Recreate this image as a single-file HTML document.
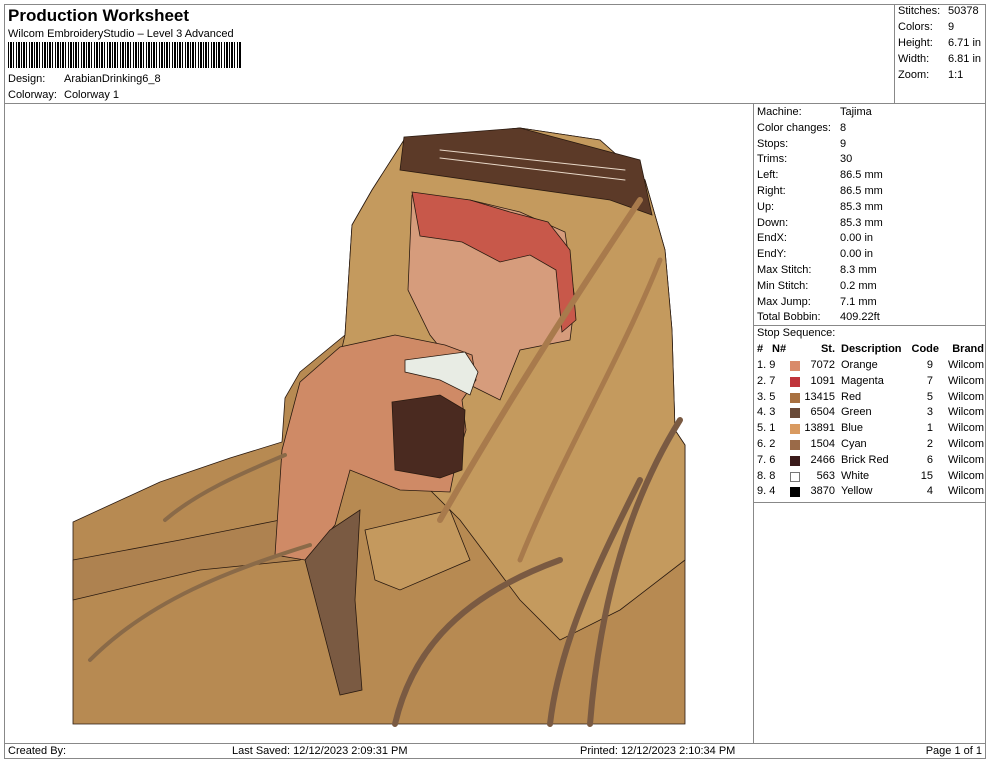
<!DOCTYPE html>
<html><head><meta charset="utf-8"><style>
*{margin:0;padding:0;box-sizing:border-box}
body{width:990px;height:762px;background:#fff;font-family:"Liberation Sans",Arial,sans-serif;font-size:11px;color:#000;position:relative;overflow:hidden}
.a{position:absolute;white-space:nowrap;line-height:13px}
.ln{position:absolute;background:#888}
</style></head><body>
<div class="ln" style="left:4px;top:4px;width:982px;height:1px"></div>
<div class="ln" style="left:4px;top:4px;width:1px;height:755px"></div>
<div class="ln" style="left:985px;top:4px;width:1px;height:755px"></div>
<div class="ln" style="left:4px;top:758px;width:982px;height:1px"></div>
<div class="ln" style="left:4px;top:103px;width:982px;height:1px"></div>
<div class="ln" style="left:894px;top:4px;width:1px;height:99px"></div>
<div class="ln" style="left:753px;top:103px;width:1px;height:641px"></div>
<div class="ln" style="left:753px;top:325px;width:233px;height:1px"></div>
<div class="ln" style="left:753px;top:502px;width:233px;height:1px"></div>
<div class="ln" style="left:4px;top:743px;width:982px;height:1px"></div>

<div class="a" style="left:8px;top:6px;font-size:17px;font-weight:bold;line-height:20px">Production Worksheet</div>
<div class="a" style="left:8px;top:28px">Wilcom EmbroideryStudio – Level 3 Advanced</div>
<div class="a" style="left:8px;top:42px;width:234px;height:26px;background:repeating-linear-gradient(90deg,#000 0 1px,#fff 1px 2px,#000 2px 4px,#fff 4px 5px,#000 5px 6px,#fff 6px 8px,#000 8px 9px,#fff 9px 10px,#000 10px 12px,#fff 12px 13px)"></div>
<div class="a" style="left:8px;top:73px">Design:</div><div class="a" style="left:64px;top:73px">ArabianDrinking6_8</div>
<div class="a" style="left:8px;top:89px">Colorway:</div><div class="a" style="left:64px;top:89px">Colorway 1</div>

<div class="a" style="left:898px;top:5px">Stitches:</div><div class="a" style="left:948px;top:5px">50378</div>
<div class="a" style="left:898px;top:21px">Colors:</div><div class="a" style="left:948px;top:21px">9</div>
<div class="a" style="left:898px;top:37px">Height:</div><div class="a" style="left:948px;top:37px">6.71 in</div>
<div class="a" style="left:898px;top:53px">Width:</div><div class="a" style="left:948px;top:53px">6.81 in</div>
<div class="a" style="left:898px;top:69px">Zoom:</div><div class="a" style="left:948px;top:69px">1:1</div>

<div style="position:absolute;left:757px;top:105px;line-height:15.8px">
<div>Machine:</div><div>Color changes:</div><div>Stops:</div><div>Trims:</div><div>Left:</div><div>Right:</div><div>Up:</div><div>Down:</div><div>EndX:</div><div>EndY:</div><div>Max Stitch:</div><div>Min Stitch:</div><div>Max Jump:</div><div>Total Bobbin:</div></div>
<div style="position:absolute;left:840px;top:105px;line-height:15.8px">
<div>Tajima</div><div>8</div><div>9</div><div>30</div><div>86.5 mm</div><div>86.5 mm</div><div>85.3 mm</div><div>85.3 mm</div><div>0.00 in</div><div>0.00 in</div><div>8.3 mm</div><div>0.2 mm</div><div>7.1 mm</div><div>409.22ft</div></div>

<div class="a" style="left:757px;top:327px">Stop Sequence:</div>
<div style="position:absolute;left:757px;top:342px;width:228px;line-height:15.8px">
<div style="font-weight:bold;text-decoration:underline;position:relative;height:15.8px">
<span style="position:absolute;left:0">#</span><span style="position:absolute;left:15px">N#</span><span style="position:absolute;right:150px">St.</span><span style="position:absolute;left:84px">Description</span><span style="position:absolute;right:46px">Code</span><span style="position:absolute;right:1px">Brand</span></div>
</div>
<div style="position:absolute;left:757px;top:358px;width:228px;line-height:15.8px">
<div style="position:relative;height:15.8px"><span style="position:absolute;left:0">1. 9</span><i style="position:absolute;left:33px;top:3px;width:10px;height:10px;background:#d98a6a"></i><span style="position:absolute;right:150px">7072</span><span style="position:absolute;left:84px">Orange</span><span style="position:absolute;right:52px">9</span><span style="position:absolute;right:1px">Wilcom</span></div>
<div style="position:relative;height:15.8px"><span style="position:absolute;left:0">2. 7</span><i style="position:absolute;left:33px;top:3px;width:10px;height:10px;background:#c0343a"></i><span style="position:absolute;right:150px">1091</span><span style="position:absolute;left:84px">Magenta</span><span style="position:absolute;right:52px">7</span><span style="position:absolute;right:1px">Wilcom</span></div>
<div style="position:relative;height:15.8px"><span style="position:absolute;left:0">3. 5</span><i style="position:absolute;left:33px;top:3px;width:10px;height:10px;background:#a87040"></i><span style="position:absolute;right:150px">13415</span><span style="position:absolute;left:84px">Red</span><span style="position:absolute;right:52px">5</span><span style="position:absolute;right:1px">Wilcom</span></div>
<div style="position:relative;height:15.8px"><span style="position:absolute;left:0">4. 3</span><i style="position:absolute;left:33px;top:3px;width:10px;height:10px;background:#6a4a38"></i><span style="position:absolute;right:150px">6504</span><span style="position:absolute;left:84px">Green</span><span style="position:absolute;right:52px">3</span><span style="position:absolute;right:1px">Wilcom</span></div>
<div style="position:relative;height:15.8px"><span style="position:absolute;left:0">5. 1</span><i style="position:absolute;left:33px;top:3px;width:10px;height:10px;background:#d99a60"></i><span style="position:absolute;right:150px">13891</span><span style="position:absolute;left:84px">Blue</span><span style="position:absolute;right:52px">1</span><span style="position:absolute;right:1px">Wilcom</span></div>
<div style="position:relative;height:15.8px"><span style="position:absolute;left:0">6. 2</span><i style="position:absolute;left:33px;top:3px;width:10px;height:10px;background:#9a6a48"></i><span style="position:absolute;right:150px">1504</span><span style="position:absolute;left:84px">Cyan</span><span style="position:absolute;right:52px">2</span><span style="position:absolute;right:1px">Wilcom</span></div>
<div style="position:relative;height:15.8px"><span style="position:absolute;left:0">7. 6</span><i style="position:absolute;left:33px;top:3px;width:10px;height:10px;background:#3a1a1a"></i><span style="position:absolute;right:150px">2466</span><span style="position:absolute;left:84px">Brick Red</span><span style="position:absolute;right:52px">6</span><span style="position:absolute;right:1px">Wilcom</span></div>
<div style="position:relative;height:15.8px"><span style="position:absolute;left:0">8. 8</span><i style="position:absolute;left:33px;top:3px;width:10px;height:10px;background:#fff;border:1px solid #777"></i><span style="position:absolute;right:150px">563</span><span style="position:absolute;left:84px">White</span><span style="position:absolute;right:52px">15</span><span style="position:absolute;right:1px">Wilcom</span></div>
<div style="position:relative;height:15.8px"><span style="position:absolute;left:0">9. 4</span><i style="position:absolute;left:33px;top:3px;width:10px;height:10px;background:#000"></i><span style="position:absolute;right:150px">3870</span><span style="position:absolute;left:84px">Yellow</span><span style="position:absolute;right:52px">4</span><span style="position:absolute;right:1px">Wilcom</span></div>
</div>

<svg style="position:absolute;left:0;top:0" width="990" height="762" viewBox="0 0 990 762">
<g stroke="#2a1a10" stroke-width="0.8">
<path d="M73,724 L73,522 L160,482 L230,458 L282,442 L285,398 L300,372 L345,335 L352,225 L372,190 L404,140 L520,128 L600,140 L645,180 L665,250 L672,330 L675,430 L685,445 L685,724 Z" fill="#b78a52"/>
<path d="M352,225 L372,190 L404,140 L520,128 L600,140 L645,180 L665,250 L672,330 L675,430 L685,445 L685,560 L620,610 L560,640 L520,600 L460,520 L420,480 L360,440 L330,400 L345,335 Z" fill="#c49a5e"/>
<path d="M73,560 L180,540 L280,520 L330,530 L300,560 L200,570 L73,600 Z" fill="#ae8250"/>
<path d="M412,195 L470,200 L520,212 L565,232 L575,300 L570,340 L520,350 L500,400 L470,385 L430,335 L408,290 Z" fill="#d69c7c"/>
<path d="M412,192 L470,200 L510,212 L548,222 L570,250 L576,320 L562,332 L556,270 L530,255 L500,262 L462,242 L420,236 Z" fill="#c8584a"/>
<path d="M404,137 L520,128 L640,160 L652,215 L610,200 L400,170 Z" fill="#5c3a28"/>
<path d="M300,382 L340,347 L395,335 L445,345 L472,355 L476,380 L462,400 L466,430 L456,462 L450,492 L400,490 L350,470 L335,525 L305,560 L275,555 L282,450 Z" fill="#cf8a66"/>
<path d="M405,360 L465,352 L478,372 L470,395 L440,380 L405,372 Z" fill="#e8ece4"/>
<path d="M392,402 L440,395 L465,410 L462,470 L440,478 L395,470 Z" fill="#4a2a20"/>
<path d="M305,560 L330,530 L360,510 L355,600 L362,690 L340,695 Z" fill="#7a5a42"/>
<path d="M365,530 L450,510 L470,560 L400,590 L375,580 Z" fill="#c4995e"/>
</g>
<g fill="none" stroke-linecap="round">
<path d="M640,200 C600,260 520,380 440,520" stroke="#a87a4c" stroke-width="6"/>
<path d="M660,260 C620,360 560,460 520,560" stroke="#a87a4c" stroke-width="5"/>
<path d="M680,420 C630,500 600,600 590,724" stroke="#7a5a42" stroke-width="6"/>
<path d="M640,480 C600,560 560,640 550,724" stroke="#7a5a42" stroke-width="6"/>
<path d="M560,560 C450,600 410,660 395,724" stroke="#7a5a42" stroke-width="6"/>
<path d="M90,660 C150,600 230,570 310,545" stroke="#8a6a48" stroke-width="4"/>
<path d="M165,520 C200,490 250,470 285,455" stroke="#8a6a48" stroke-width="4"/>
<path d="M440,150 L625,170 M440,158 L625,180" stroke="#e8d8c8" stroke-width="1"/>
</g>
</svg>

<div class="a" style="left:8px;top:745px">Created By:</div>
<div class="a" style="left:232px;top:745px">Last Saved: 12/12/2023 2:09:31 PM</div>
<div class="a" style="left:580px;top:745px">Printed: 12/12/2023 2:10:34 PM</div>
<div class="a" style="right:8px;top:745px">Page 1 of 1</div>
</body></html>
